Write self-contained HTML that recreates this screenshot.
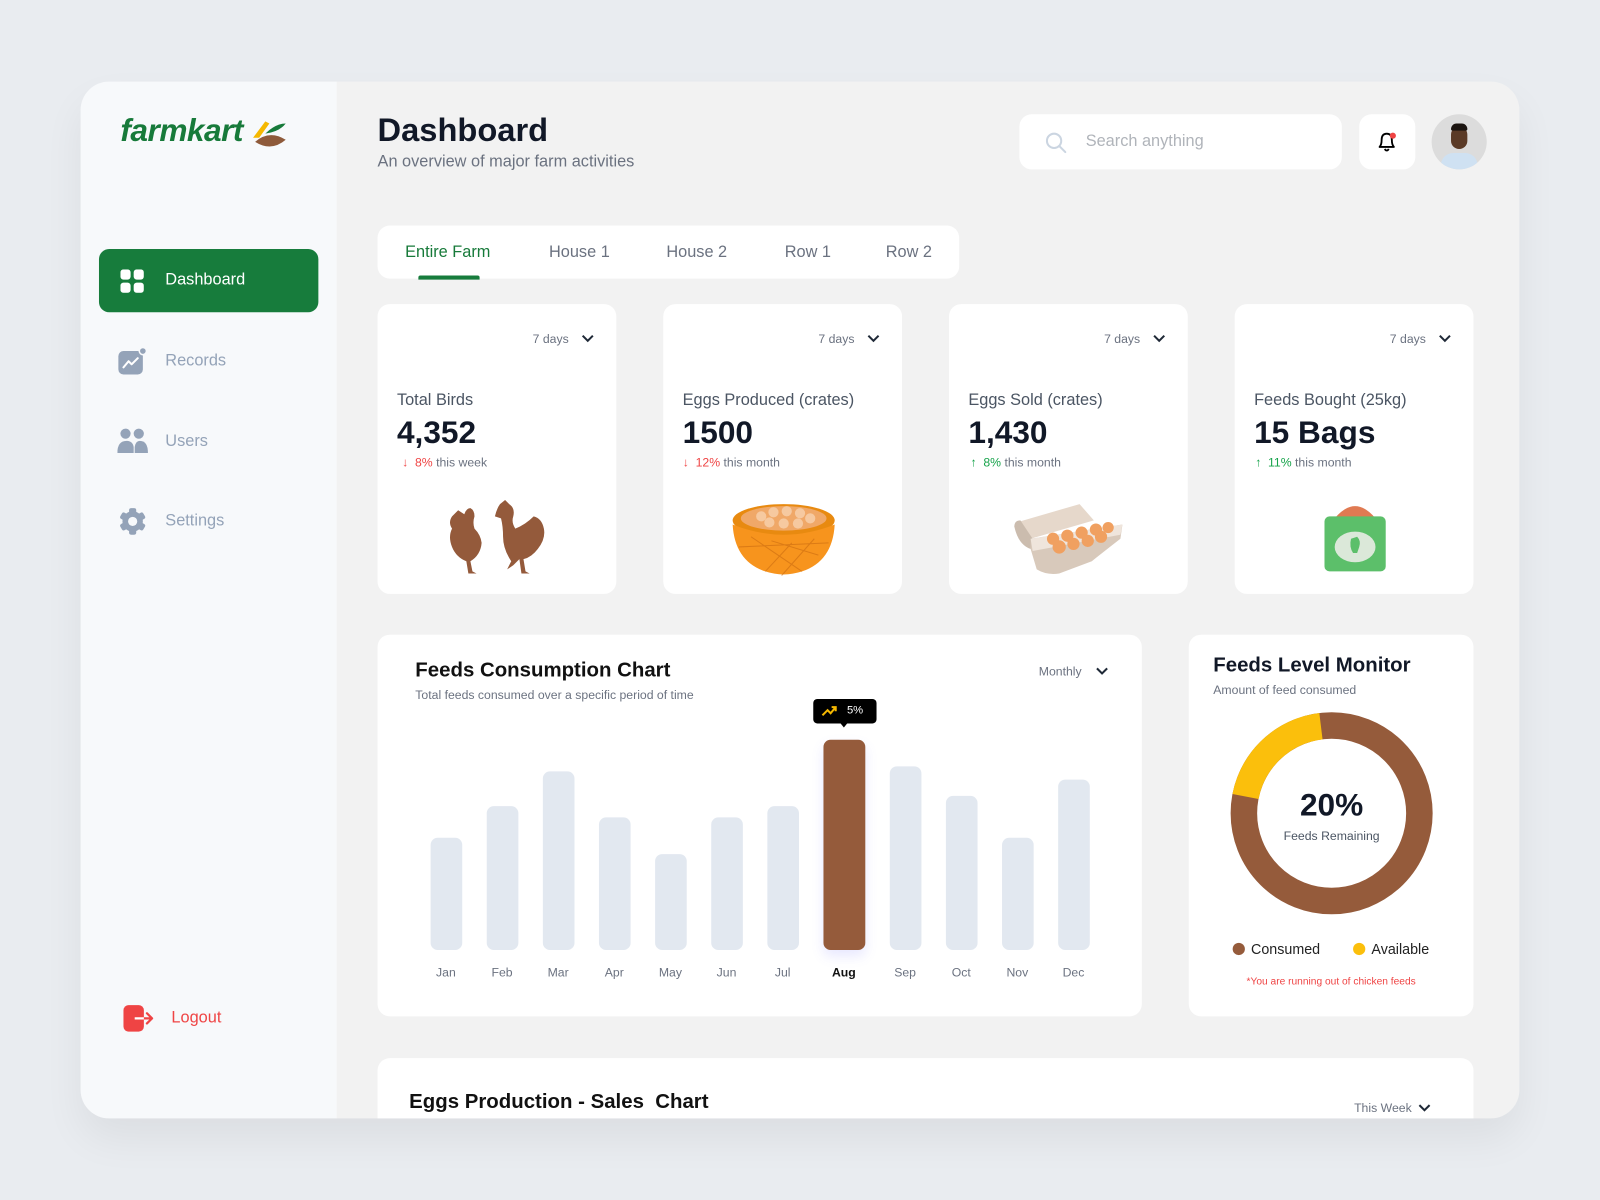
<!DOCTYPE html>
<html><head><meta charset="utf-8"><style>
*{margin:0;padding:0;box-sizing:border-box}
html,body{width:1600px;height:1200px;overflow:hidden;background:#e9ecf0;font-family:"Liberation Sans",sans-serif}
#w{position:absolute;left:0;top:0;width:1568px;height:1176px;transform:scale(1.020408);transform-origin:0 0}
.a{position:absolute}
.card{position:absolute;background:#fff;border-radius:12px}
.t{position:absolute;white-space:nowrap}
.days{font-size:12px;color:#6b7280}
.lbl{font-size:16px;color:#4b5563}
.val{font-size:31px;font-weight:bold;color:#111827}
.chg{font-size:12px;color:#6b7280}
.bar{position:absolute;width:31px;background:#e2e8f0;border-radius:7px;bottom:245px}
.m{position:absolute;top:946px;font-size:12px;color:#6b7280;width:40px;text-align:center}
</style></head><body><div id="w">
<div class="a" style="left:79px;top:80px;width:1410px;height:1016px;border-radius:28px;background:#f2f2f2;overflow:hidden;box-shadow:0 20px 40px rgba(0,0,0,0.06)">
<div class="a" style="left:0;top:0;width:251px;height:1016px;background:#f7f9fb"></div>
</div>
<!-- logo -->
<div class="t" style="left:118px;top:110px;font-size:31px;font-weight:bold;font-style:italic;color:#177a3a;letter-spacing:-0.5px">farmkart</div>
<svg class="a" style="left:246px;top:115px" width="36" height="32" viewBox="0 0 36 32"><path d="M2 20 L14 4 L18 6 L8 20Z" fill="#f5b800"/><path d="M14 16 Q24 6 34 6 Q28 14 14 16Z" fill="#177a3a"/><path d="M4 24 Q18 12 34 22 Q20 34 4 24Z" fill="#8e5a3a"/></svg>
<!-- nav -->
<div class="a" style="left:97px;top:244px;width:215px;height:62px;border-radius:10px;background:#177c3c"></div>
<svg class="a" style="left:118px;top:264px" width="23" height="23"><rect x="0" y="0" width="10" height="10" rx="3" fill="#fff"/><rect x="13" y="0" width="10" height="10" rx="3" fill="#fff"/><rect x="0" y="13" width="10" height="10" rx="3" fill="#fff"/><rect x="13" y="13" width="10" height="10" rx="3" fill="#fff"/></svg>
<div class="t" style="left:162px;top:266px;font-size:16px;color:#fff">Dashboard</div>
<svg class="a" style="left:115px;top:340px" width="30" height="28"><rect x="1" y="4" width="24" height="23" rx="5" fill="#94a3b8"/><circle cx="25" cy="4" r="3.5" fill="#94a3b8" stroke="#f7f9fb" stroke-width="1.5"/><path d="M6 20 L11 14 L14 17 L20 11" stroke="#fff" stroke-width="2" fill="none" stroke-linecap="round" stroke-linejoin="round"/></svg>
<div class="t" style="left:162px;top:345px;font-size:16px;color:#94a3b8">Records</div>
<svg class="a" style="left:115px;top:419px" width="30" height="26"><circle cx="8" cy="6" r="5" fill="#94a3b8"/><circle cx="21" cy="6" r="5" fill="#94a3b8"/><path d="M0 25 Q0 13 9 13 Q15 13 16 19 L16 25Z" fill="#94a3b8"/><path d="M17 25 L17 19 Q18 13 22 13 Q30 13 30 25Z" fill="#94a3b8"/></svg>
<div class="t" style="left:162px;top:424px;font-size:16px;color:#94a3b8">Users</div>
<svg class="a" style="left:116px;top:497px" width="28" height="28" viewBox="0 0 28 28"><g fill="#94a3b8" transform="translate(14 14)"><rect x="-3.5" y="-13" width="7" height="26" rx="2"/><rect x="-3.5" y="-13" width="7" height="26" rx="2" transform="rotate(60)"/><rect x="-3.5" y="-13" width="7" height="26" rx="2" transform="rotate(120)"/><circle r="10"/></g><circle cx="14" cy="14" r="4.5" fill="#f7f9fb"/></svg>
<div class="t" style="left:162px;top:502px;font-size:16px;color:#94a3b8">Settings</div>
<svg class="a" style="left:120px;top:984px" width="32" height="28"><rect x="1" y="1" width="20" height="26" rx="5" fill="#ef4444"/><path d="M12 14 H29 M24 9 L29 14 L24 19" stroke="#ef4444" stroke-width="2.2" fill="none" stroke-linecap="round" stroke-linejoin="round"/><path d="M12 14 H21" stroke="#fff" stroke-width="2.2"/></svg>
<div class="t" style="left:168px;top:989px;font-size:16px;color:#ef4444">Logout</div>
<!-- header -->
<div class="t" style="left:370px;top:109px;font-size:32px;font-weight:bold;color:#111827">Dashboard</div>
<div class="t" style="left:370px;top:150px;font-size:16px;color:#6b7280">An overview of major farm activities</div>
<div class="card" style="left:999px;top:112px;width:316px;height:54px"></div>
<svg class="a" style="left:1023px;top:128px" width="24" height="24"><circle cx="10" cy="10" r="7" stroke="#cbd5e1" stroke-width="2" fill="none"/><path d="M15 15 L21 21" stroke="#cbd5e1" stroke-width="2" stroke-linecap="round"/></svg>
<div class="t" style="left:1064px;top:130px;font-size:16px;color:#b0b4ba">Search anything</div>
<div class="card" style="left:1332px;top:112px;width:55px;height:54px"></div>
<svg class="a" style="left:1348px;top:127px" width="22" height="24"><path d="M4 17 Q6 15 6 10 Q6 4 11 4 Q16 4 16 10 Q16 15 18 17Z" stroke="#000" stroke-width="1.8" fill="none" stroke-linejoin="round"/><path d="M9 19 Q11 22 13 19" stroke="#000" stroke-width="1.8" fill="none"/><circle cx="17" cy="6" r="3" fill="#ef4444"/></svg>
<div class="a" style="left:1403px;top:112px;width:54px;height:54px;border-radius:50%;background:#dcdcdc;overflow:hidden">
<div class="a" style="left:9px;top:38px;width:36px;height:22px;border-radius:12px 12px 0 0;background:#cfe1f2"></div>
<div class="a" style="left:19px;top:12px;width:16px;height:22px;border-radius:8px;background:#5a3a26"></div>
<div class="a" style="left:19px;top:9px;width:16px;height:7px;border-radius:7px 7px 2px 2px;background:#1b1410"></div>
</div>
<!-- tabs -->
<div class="card" style="left:370px;top:221px;width:570px;height:52px"></div>
<div class="t" style="left:397px;top:239px;font-size:16px;color:#177a3a">Entire Farm</div>
<div class="a" style="left:410px;top:270px;width:60px;height:4px;background:#177c3c;border-radius:2px 2px 0 0"></div>
<div class="t" style="left:538px;top:239px;font-size:16px;color:#6b7280">House 1</div>
<div class="t" style="left:653px;top:239px;font-size:16px;color:#6b7280">House 2</div>
<div class="t" style="left:769px;top:239px;font-size:16px;color:#6b7280">Row 1</div>
<div class="t" style="left:868px;top:239px;font-size:16px;color:#6b7280">Row 2</div>
<!-- stat cards -->
<div class="card" style="left:370px;top:298px;width:234px;height:284px"></div>
<div class="card" style="left:650px;top:298px;width:234px;height:284px"></div>
<div class="card" style="left:930px;top:298px;width:234px;height:284px"></div>
<div class="card" style="left:1210px;top:298px;width:234px;height:284px"></div>
<div class="t days" style="left:522px;top:325px">7 days</div>
<div class="t days" style="left:802px;top:325px">7 days</div>
<div class="t days" style="left:1082px;top:325px">7 days</div>
<div class="t days" style="left:1362px;top:325px">7 days</div>
<svg class="a" style="left:570px;top:327px" width="12" height="10"><path d="M1 2 L6 7 L11 2" stroke="#1f2937" stroke-width="2" fill="none"/></svg>
<svg class="a" style="left:850px;top:327px" width="12" height="10"><path d="M1 2 L6 7 L11 2" stroke="#1f2937" stroke-width="2" fill="none"/></svg>
<svg class="a" style="left:1130px;top:327px" width="12" height="10"><path d="M1 2 L6 7 L11 2" stroke="#1f2937" stroke-width="2" fill="none"/></svg>
<svg class="a" style="left:1410px;top:327px" width="12" height="10"><path d="M1 2 L6 7 L11 2" stroke="#1f2937" stroke-width="2" fill="none"/></svg>
<div class="t lbl" style="left:389px;top:384px">Total Birds</div>
<div class="t lbl" style="left:669px;top:384px">Eggs Produced (crates)</div>
<div class="t lbl" style="left:949px;top:384px">Eggs Sold (crates)</div>
<div class="t lbl" style="left:1229px;top:384px">Feeds Bought (25kg)</div>
<div class="t val" style="left:389px;top:406px">4,352</div>
<div class="t val" style="left:669px;top:406px">1500</div>
<div class="t val" style="left:949px;top:406px">1,430</div>
<div class="t val" style="left:1229px;top:406px">15 Bags</div>
<div class="t chg" style="left:394px;top:446px"><span style="color:#ef4444">&#8595;&nbsp; 8%</span> this week</div>
<div class="t chg" style="left:669px;top:446px"><span style="color:#ef4444">&#8595;&nbsp; 12%</span> this month</div>
<div class="t chg" style="left:951px;top:446px"><span style="color:#16a34a">&#8593;&nbsp; 8%</span> this month</div>
<div class="t chg" style="left:1230px;top:446px"><span style="color:#16a34a">&#8593;&nbsp; 11%</span> this month</div>
<!-- chickens -->
<svg class="a" style="left:435px;top:488px" width="105" height="78" viewBox="0 0 105 78"><g fill="#945a3b"><path d="M8 18 L14 12 L20 16 Q22 10 26 10 Q30 12 30 18 Q28 24 30 30 Q36 36 37 44 Q36 56 26 62 L28 72 L32 74 L24 74 L22 62 Q12 58 8 48 Q4 38 8 30 Q4 24 8 18Z"/><path d="M55 6 L60 2 L64 6 Q70 10 68 18 Q66 24 70 30 Q80 26 88 18 Q96 20 98 30 Q100 40 92 50 Q86 58 78 60 L80 72 L84 74 L76 74 L74 60 L68 66 L62 70 L66 62 Q58 50 58 38 Q58 28 56 20 L50 18 Q52 10 55 6Z"/></g></svg>
<!-- basket -->
<svg class="a" style="left:716px;top:488px" width="104" height="78" viewBox="0 0 104 78"><ellipse cx="52" cy="22" rx="50" ry="16" fill="#e88a10"/><ellipse cx="52" cy="20" rx="42" ry="12" fill="#f0a868"/><g fill="#f6c9a0"><circle cx="30" cy="18" r="5"/><circle cx="42" cy="14" r="5"/><circle cx="55" cy="13" r="5"/><circle cx="68" cy="15" r="5"/><circle cx="78" cy="20" r="5"/><circle cx="38" cy="24" r="5"/><circle cx="52" cy="25" r="5"/><circle cx="66" cy="25" r="5"/></g><path d="M2 26 Q52 46 102 26 Q100 62 70 72 Q52 78 34 72 Q4 62 2 26Z" fill="#f7941d"/><path d="M20 38 L70 72 M40 42 L86 56 M60 44 L34 72 M82 40 L50 76 M8 48 L96 44" stroke="#c96a10" stroke-width="1" fill="none" opacity=".6"/></svg>
<!-- egg tray -->
<svg class="a" style="left:990px;top:488px" width="114" height="78" viewBox="0 0 114 78"><path d="M6 24 L68 6 L82 22 L20 40Z" fill="#e6d8cb"/><path d="M4 28 Q4 22 10 22 L22 40 L20 50 Q8 46 4 28Z" fill="#cbbcae"/><path d="M20 40 L110 26 L108 40 Q90 54 80 62 L48 74 Q36 76 26 70 L20 50Z" fill="#d8c9bb"/><path d="M20 40 L110 26 L108 36 L22 52Z" fill="#efe5dc"/><g fill="#f0a060"><circle cx="42" cy="40" r="6"/><circle cx="56" cy="37" r="6"/><circle cx="70" cy="34" r="6"/><circle cx="84" cy="31" r="6"/><circle cx="96" cy="29" r="5.5"/><circle cx="48" cy="48" r="6.5"/><circle cx="62" cy="45" r="6"/><circle cx="76" cy="42" r="6"/><circle cx="89" cy="38" r="6"/></g></svg>
<!-- feed bag -->
<svg class="a" style="left:1296px;top:490px" width="64" height="72" viewBox="0 0 64 72"><path d="M12 18 Q32 -6 52 18Z" fill="#e07a52"/><rect x="2" y="16" width="60" height="54" rx="5" fill="#5cbf6a"/><ellipse cx="32" cy="46" rx="20" ry="15" fill="#dbe8d9"/><path d="M28 38 L34 36 Q38 40 36 46 L34 52 L30 52 Q26 46 28 38Z" fill="#5cbf6a"/></svg>
<!-- chart card -->
<div class="card" style="left:370px;top:622px;width:749px;height:374px"></div>
<div class="t" style="left:407px;top:646px;font-size:20px;font-weight:bold;color:#111">Feeds Consumption Chart</div>
<div class="t" style="left:407px;top:674px;font-size:12px;color:#6b7280">Total feeds consumed over a specific period of time</div>
<div class="t" style="left:1018px;top:651px;font-size:12px;color:#6b7280">Monthly</div>
<svg class="a" style="left:1074px;top:653px" width="12" height="10"><path d="M1 2 L6 7 L11 2" stroke="#1f2937" stroke-width="2" fill="none"/></svg>
<div class="bar" style="left:422px;height:110px"></div>
<div class="bar" style="left:477px;height:141px"></div>
<div class="bar" style="left:532px;height:175px"></div>
<div class="bar" style="left:587px;height:130px"></div>
<div class="bar" style="left:642px;height:94px"></div>
<div class="bar" style="left:697px;height:130px"></div>
<div class="bar" style="left:752px;height:141px"></div>
<div class="bar" style="left:807px;width:41px;height:206px;background:#955b3b;box-shadow:0 6px 12px rgba(100,100,255,0.15)"></div>
<div class="bar" style="left:872px;height:180px"></div>
<div class="bar" style="left:927px;height:151px"></div>
<div class="bar" style="left:982px;height:110px"></div>
<div class="bar" style="left:1037px;height:167px"></div>
<div class="a" style="left:797px;top:685px;width:62px;height:24px;background:#000;border-radius:4px"></div>
<div class="a" style="left:823px;top:708px;width:0;height:0;border-left:4px solid transparent;border-right:4px solid transparent;border-top:5px solid #000"></div>
<svg class="a" style="left:805px;top:690px" width="16" height="14"><path d="M1 11 L6 6 L9 9 L14 3 M10 3 H14 V7" stroke="#f5b800" stroke-width="2" fill="none"/></svg>
<div class="t" style="left:830px;top:690px;font-size:11px;color:#fff">5%</div>
<div class="m" style="left:417px">Jan</div><div class="m" style="left:472px">Feb</div><div class="m" style="left:527px">Mar</div><div class="m" style="left:582px">Apr</div><div class="m" style="left:637px">May</div><div class="m" style="left:692px">Jun</div><div class="m" style="left:747px">Jul</div><div class="m" style="left:807px;font-weight:bold;color:#111">Aug</div><div class="m" style="left:867px">Sep</div><div class="m" style="left:922px">Oct</div><div class="m" style="left:977px">Nov</div><div class="m" style="left:1032px">Dec</div>
<!-- donut card -->
<div class="card" style="left:1165px;top:622px;width:279px;height:374px"></div>
<div class="t" style="left:1189px;top:641px;font-size:20px;font-weight:bold;color:#111827">Feeds Level Monitor</div>
<div class="t" style="left:1189px;top:669px;font-size:12px;color:#6b7280">Amount of feed consumed</div>
<svg class="a" style="left:1205px;top:697px" width="200" height="200" viewBox="0 0 200 200"><circle cx="100" cy="100" r="86" stroke="#955b3b" stroke-width="26" fill="none"/><circle cx="100" cy="100" r="86" stroke="#fbbf0c" stroke-width="26" fill="none" stroke-dasharray="108 500" transform="rotate(191 100 100)"/></svg>
<div class="t" style="left:1205px;top:771px;width:200px;text-align:center;font-size:31px;font-weight:bold;color:#111827">20%</div>
<div class="t" style="left:1205px;top:812px;width:200px;text-align:center;font-size:12px;color:#4b5563">Feeds Remaining</div>
<div class="a" style="left:1208px;top:924px;width:12px;height:12px;border-radius:50%;background:#955b3b"></div>
<div class="t" style="left:1226px;top:922px;font-size:14px;color:#222">Consumed</div>
<div class="a" style="left:1326px;top:924px;width:12px;height:12px;border-radius:50%;background:#fbbf0c"></div>
<div class="t" style="left:1344px;top:922px;font-size:14px;color:#222">Available</div>
<div class="t" style="left:1165px;top:957px;width:279px;text-align:center;font-size:10px;color:#ef4444">*You are running out of chicken feeds</div>
<!-- bottom card -->
<div class="a" style="left:370px;top:1037px;width:1074px;height:59px;background:#fff;border-radius:12px 12px 0 0"></div>
<div class="t" style="left:401px;top:1069px;font-size:20px;font-weight:bold;color:#111">Eggs Production - Sales&nbsp; Chart</div>
<div class="t" style="left:1327px;top:1079px;font-size:12px;color:#6b7280">This Week</div>
<svg class="a" style="left:1390px;top:1081px" width="12" height="10"><path d="M1 2 L6 7 L11 2" stroke="#1f2937" stroke-width="2" fill="none"/></svg>
</div></body></html>
